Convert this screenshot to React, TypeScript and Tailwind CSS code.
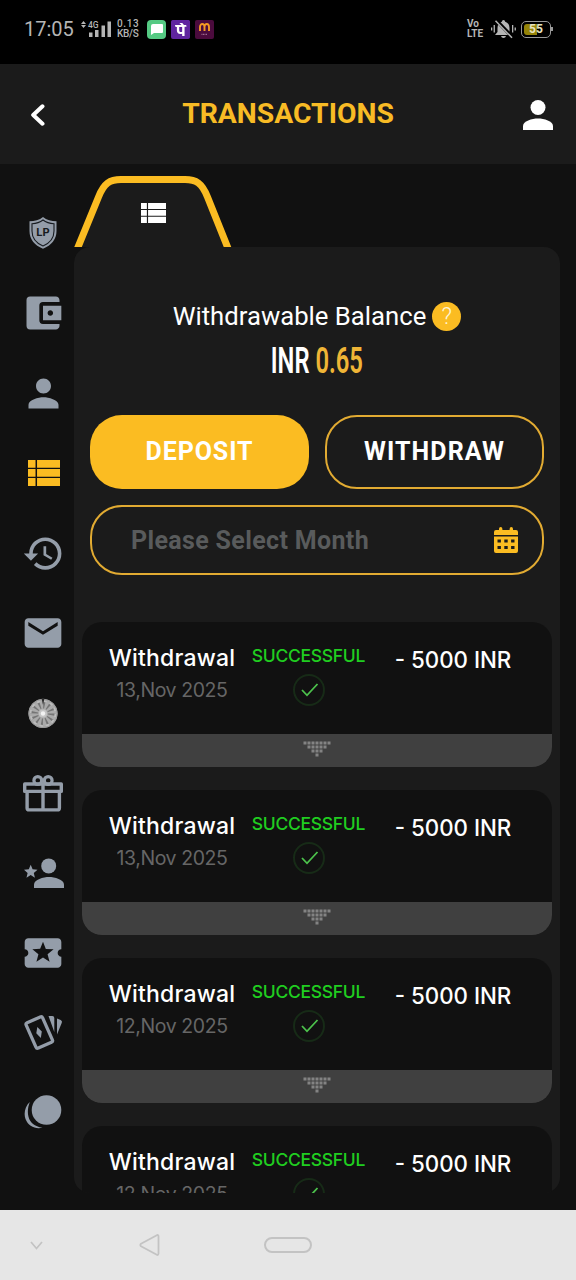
import type { ReactNode } from "react";
import { MdAccountBalanceWallet, MdEmail, MdHistory, MdLocalPlay, MdPerson } from "react-icons/md";
import { SiPhonepe } from "react-icons/si";

interface Transaction {
  type: string;
  date: string;
  status: string;
  amount: string;
}

const transactions: Transaction[] = [
  { type: "Withdrawal", date: "13,Nov 2025", status: "SUCCESSFUL", amount: "- 5000 INR" },
  { type: "Withdrawal", date: "13,Nov 2025", status: "SUCCESSFUL", amount: "- 5000 INR" },
  { type: "Withdrawal", date: "12,Nov 2025", status: "SUCCESSFUL", amount: "- 5000 INR" },
  { type: "Withdrawal", date: "12,Nov 2025", status: "SUCCESSFUL", amount: "- 5000 INR" },
];

const ListIcon = ({ className }: { className?: string }) => (
  <svg viewBox="4 5 17 14" fill="currentColor" preserveAspectRatio="none" className={className}>
    <path d="M4 14h4v-4.100H4zM4 19h4v-4.300H4zM4 9.200h4V5H4zM8.800 14H21v-4.100H8.800zM8.800 19H21v-4.300H8.800zM8.800 5v4.200H21V5z" />
  </svg>
);

const ShieldIcon = () => (
  <svg viewBox="0 0 28 32" className="h-8 w-7">
    <path d="M14 0C10.500 3.200 5.500 4.300 0.500 4.300V14C0.500 22 5.500 28.500 14 31.700C22.500 28.500 27.500 22 27.500 14V4.300C22.500 4.300 17.500 3.200 14 0Z" fill="#949da9" />
    <path d="M14 3C10.500 5.700 6.600 6.500 3 6.700V14C3 20.500 7 26 14 29C21 26 25 20.500 25 14V6.700C21.400 6.500 17.500 5.700 14 3Z" fill="none" stroke="#171b20" strokeWidth="1.100" />
    <text x="14" y="18.500" textAnchor="middle" fontSize="11" fontWeight="700" fontFamily="Inter, sans-serif" fill="#171b20">
      LP
    </text>
  </svg>
);

const WheelIcon = () => (
  <svg viewBox="0 0 30 32" className="h-8 w-[30px]">
    <circle cx="15" cy="16.500" r="14.600" fill="#aaa" />
    <circle cx="15" cy="16.500" r="9" fill="none" stroke="#757575" strokeWidth="8" strokeDasharray="1.700 3.010" />
    <circle cx="15" cy="16.500" r="12.500" fill="none" stroke="#bcbcbc" strokeWidth="2" strokeDasharray="3.500 3.040" />
    <circle cx="15" cy="16.500" r="14.100" fill="none" stroke="#9a9a9a" />
    <circle cx="15" cy="16.500" r="4" fill="#c5c5c5" />
    <circle cx="15" cy="16.500" r="2.200" fill="#f2f2f2" />
    <path d="M13.500 1h3L15 8z" fill="#2b2b2b" />
  </svg>
);

const GiftIcon = () => (
  <svg viewBox="0 0 40 37" fill="none" stroke="currentColor" strokeWidth="3.400" strokeLinejoin="round" className="h-[37px] w-10">
    <rect x="1.700" y="9" width="36.600" height="7.400" />
    <path d="M4.100 16.500v16.400q0 2 2 2h28.300q2 0 2-2V16.500M20 9v26" />
    <circle cx="14.800" cy="5.500" r="3.900" strokeWidth="3.200" />
    <circle cx="25.200" cy="5.500" r="3.900" strokeWidth="3.200" />
  </svg>
);

const PersonStarIcon = () => (
  <svg viewBox="0 0 40 31" fill="currentColor" className="ml-px h-[31px] w-10 shrink-0">
    <circle cx="24.700" cy="7.900" r="7.500" />
    <path d="M10 30v-3.500C10 21.500 19.500 19 25 19s15 2.500 15 7.500V30z" />
    <path d="M6.700 6.800l1.900 4.500 4.900.4-3.700 3.200 1.100 4.800-4.200-2.600-4.200 2.600 1.100-4.800L0 11.700l4.800-.4z" />
  </svg>
);

const CardsIcon = () => (
  <svg viewBox="0 0 40 36" className="h-9 w-10">
    <rect x="-9" y="-13.800" width="18" height="27.600" rx="1.800" transform="translate(16.300 17.500) rotate(-24)" fill="none" stroke="currentColor" strokeWidth="3.300" />
    <path d="M14.300 12l4.500 4.500-1 6.500-4.500-4.700z" fill="currentColor" />
    <path d="M25.500 1h3.800q2 0 2 2v14zM34 3.400l3.700 1.600q1.900.9 1.100 2.800L34 19.500z" fill="currentColor" />
  </svg>
);

const CoinsIcon = () => (
  <svg viewBox="0 0 38 34" fill="currentColor" className="-mt-[3px] h-[34px] w-[38px]">
    <circle cx="22.500" cy="15" r="14.800" />
    <path d="M5.800 7C1 11.500-.5 18.500 1.500 24c2.700 7 9.500 10.500 17 8.800-8-1.200-12.500-5-14-11-1.300-5-.5-10 1.300-14.800z" />
  </svg>
);

const CalendarIcon = () => (
  <svg viewBox="0 0 24 26" fill="#fbbc22" className="h-[26px] w-6">
    <path
      fillRule="evenodd"
      d="M5 2q0-2 1.700-2T8.400 2v1h7.200V2q0-2 1.700-2T19 2v1h3a2 2 0 0 1 2 2v3H0V5a2 2 0 0 1 2-2h3zM0 9.500h24V24a2 2 0 0 1-2 2H2a2 2 0 0 1-2-2zM3.500 12.500v3h3.400v-3zm6.800 0v3h3.400v-3zm6.800 0v3h3.400v-3zM3.500 19v3h3.400v-3zm6.800 0v3h3.400v-3zm6.800 0v3h3.400v-3z"
    />
  </svg>
);

const MutedBellIcon = () => (
  <svg viewBox="0 0 25 20" fill="currentColor" className="h-5 w-[25px]">
    <path d="M12.500 1q1.500 0 1.700 1.700 4.300 1.300 4.300 6.300v4l2.500 3H4l2.500-3V9q0-5 4.300-6.300Q11 1 12.500 1zM10 17h5q-.5 2-2.500 2T10 17z" />
    <path d="M5 1l17 17.500" stroke="#000" strokeWidth="3.500" />
    <path d="M4.500 1.800l16.500 17" stroke="currentColor" strokeWidth="1.500" />
    <path d="M0 8.500h1.300v3H0zM2.600 6h1.300v7.500H2.600zM21 6h1.300v7.500H21zM23.600 8.500h1.300v3h-1.300z" />
  </svg>
);

const sidebarIcons: ReactNode[] = [
  <ShieldIcon />,
  <MdAccountBalanceWallet className="size-11" />,
  <MdPerson className="size-[45px]" />,
  <ListIcon className="ml-0.5 h-[26px] w-8 text-[#fbbc22]" />,
  <MdHistory className="ml-px size-[43px]" />,
  <MdEmail className="size-11" />,
  <WheelIcon />,
  <GiftIcon />,
  <PersonStarIcon />,
  <MdLocalPlay className="size-11" />,
  <CardsIcon />,
  <CoinsIcon />,
];

const StatusBar = () => (
  <div className="flex h-16 shrink-0 items-start justify-between bg-black pr-[23px] pl-6 text-[#b5b5b5]">
    <div className="flex h-[58px] items-center">
      <span className="w-[50px] text-[20px]">17:05</span>
      <svg viewBox="0 0 31 18" fill="currentColor" className="ml-[7px] h-[18px] w-[31px]">
        <path d="M2.500 1L5 4H0zM2.500 8L0 5h5zM8 12.500h3.500V17H8zM14 10h3.500v7H14zM20.500 5.500H24V17h-3.500zM26.500 1.500H30V17h-3.500z" />
        <text x="7" y="7.500" fontSize="8.500" fontWeight="500" fontFamily="Roboto, sans-serif">
          4G
        </text>
      </svg>
      <div className="ml-[5px] w-6 text-[10px] leading-[10px] font-medium">
        <div className="tracking-[0.600px]">0.13</div>
        <div className="tracking-[-0.300px]">KB/S</div>
      </div>
      <div className="ml-[6px] flex size-[19px] items-center justify-center rounded-[4px] bg-[#55ca83]">
        <svg viewBox="0 0 12 12" fill="#fff" className="size-3">
          <path d="M2 1h9q1 0 1 1v7q0 1-1 1H3L0 12V3q0-2 2-2z" />
        </svg>
      </div>
      <div className="relative ml-[5px] flex size-[19px] items-center justify-center overflow-hidden rounded-[2px] bg-[#5f259f]">
        <div className="absolute size-[13px] bg-white" />
        <SiPhonepe className="relative size-6 shrink-0 text-[#5f259f]" />
      </div>
      <div className="ml-[5px] flex size-[19px] flex-col items-center justify-center rounded-[2px] bg-[#4b0b3d]">
        <svg viewBox="0 0 11 12" fill="none" className="h-3 w-[11px]">
          <path d="M1 8V4C1 0 5.500 0 5.500 4V8M5.500 4C5.500 0 10 0 10 4V8" stroke="#f59a23" strokeWidth="1.900" />
          <path d="M2.500 11.300h6" stroke="#c9a0bb" strokeWidth=".8" strokeDasharray="1 .5" />
        </svg>
      </div>
    </div>
    <div className="flex h-[58px] items-center">
      <div className="w-[18px] text-[10px] leading-[10px] font-bold">
        <div>Vo</div>
        <div>LTE</div>
      </div>
      <div className="ml-[6px]">
        <MutedBellIcon />
      </div>
      <div className="ml-[5px] flex h-[17px] w-[30px] rounded-[5px] border-[1.500px] border-[#999] p-[2px]">
        <div className="relative h-full w-[13px] rounded-l-[3px] bg-[#948308]">
          <span className="absolute top-1/2 left-[5px] -translate-y-1/2 text-[12px] leading-none font-bold text-[#e8e4c0]">55</span>
        </div>
      </div>
      <div className="h-1 w-[2px] bg-[#999]" />
    </div>
  </div>
);

const Header = () => (
  <header className="flex h-[100px] shrink-0 items-center justify-between bg-[#1b1b1b] pr-[23px] pl-[30px] text-white">
    <svg viewBox="0 0 15 24" fill="none" stroke="currentColor" strokeWidth="4" strokeLinecap="round" className="mt-[2px] h-6 w-[15px]">
      <path d="M12.500 3.300L3.200 12l9.300 8.700" strokeLinejoin="round" />
    </svg>
    <h1 className="ml-[8px] text-[28.300px] leading-8 font-bold whitespace-nowrap text-[#f8bb25]">TRANSACTIONS</h1>
    <svg viewBox="0 0 30 30" fill="currentColor" className="mt-[2px] h-[30px] w-[30px]">
      <circle cx="15" cy="7.500" r="7.500" />
      <path d="M0 30v-4c0-5 9-7.500 15-7.500s15 2.500 15 7.500v4z" />
    </svg>
  </header>
);

const arrowRows = [
  { y: 0, count: 7 },
  { y: 4, count: 5 },
  { y: 8, count: 3 },
  { y: 12, count: 1 },
];

const TransactionCard = ({ type, date, status, amount }: Transaction) => (
  <div className="h-[145px] shrink-0 overflow-hidden rounded-[20px] bg-[#111] font-[Inter,sans-serif]">
    <div className="flex h-28 px-5 text-center whitespace-nowrap">
      <div className="w-[140px] pt-5">
        <div className="text-[23px] leading-8 font-medium tracking-[0.200px] text-white">{type}</div>
        <div className="text-[19.500px] leading-8 tracking-[-0.400px] text-[#666]">{date}</div>
      </div>
      <div className="flex w-[133px] flex-col items-center pt-[22px]">
        <div className="text-[17.500px] leading-6 font-medium tracking-[-0.300px] text-[#20cd20]">{status}</div>
        <div className="mt-[6px] flex size-8 items-center justify-center rounded-full border-2 border-[#172b17]">
          <svg viewBox="0 0 18 14" fill="none" stroke="#4cc24c" strokeWidth="1.800" className="ml-[2px] h-[14px] w-[18px]">
            <path d="M1 7l5 5.300L16.500 1" />
          </svg>
        </div>
      </div>
      <div className="w-[156px] pt-[22px] text-[22.300px] leading-8 font-medium text-white">{amount}</div>
    </div>
    <div className="flex h-[33px] justify-center bg-[#404040] pt-[7px]">
      <svg viewBox="0 0 28 16" fill="#838383" className="h-4 w-7">
        {arrowRows.map(({ y, count }) =>
          Array.from({ length: count }, (_, i) => <rect key={`${y}-${i}`} x={14 - count * 2 + i * 4 + 0.5} y={y + 0.5} width="3" height="3" />),
        )}
      </svg>
    </div>
  </div>
);

const App = () => (
  <div className="flex h-[1280px] w-[576px] flex-col overflow-hidden bg-[#111] font-[Roboto,sans-serif]">
    <StatusBar />
    <Header />

    <div className="flex h-[1046px] shrink-0">
      <aside className="flex w-[74px] shrink-0 flex-col pt-[29px] pl-[12px] text-[#949da9]">
        {sidebarIcons.map((icon, i) => (
          <div key={i} className="flex h-20 w-[62px] shrink-0 items-center justify-center">
            {icon}
          </div>
        ))}
      </aside>

      <main className="flex w-[486px] flex-col pt-3">
        <div className="relative h-[71px] shrink-0">
          <svg viewBox="0 0 158 71" className="h-[71px] w-[158px]">
            <path d="M2 76L24.500 21C30 7 36 3.500 47 3.500H111C122 3.500 128 7 133.500 21L155.500 76" fill="#1b1b1b" stroke="#fbbc22" strokeWidth="7" />
          </svg>
          <ListIcon className="absolute top-[27px] left-[67px] h-5 w-[25px] text-white" />
        </div>

        <section className="flex h-[946px] flex-col overflow-hidden rounded-[16px] bg-[#1b1b1b] px-2">
          <div className="flex h-[168px] shrink-0 flex-col items-center pt-[53px]">
            <div className="flex items-center gap-[6px]">
              <span className="text-[25.700px] leading-8 text-white">Withdrawable Balance</span>
              <span className="flex size-[29px] items-center justify-center rounded-full bg-[#fbbc22] text-[23px] leading-none font-light text-[#fff5d8]">?</span>
            </div>
            <div className="mt-[9px] flex scale-x-[0.66] gap-[9px] text-[36px] leading-10 font-semibold whitespace-nowrap text-white">
              <span>INR</span>
              <span className="text-[#efb536]">0.65</span>
            </div>
          </div>

          <div className="flex shrink-0 gap-4 px-2 text-[25px] font-bold text-white">
            <button type="button" className="h-[74px] w-[219px] rounded-[32px] bg-[#fbbc22] tracking-[0.900px]">
              DEPOSIT
            </button>
            <button type="button" className="h-[74px] w-[219px] rounded-[32px] border-2 border-[#e2ab32] tracking-[1.100px]">
              WITHDRAW
            </button>
          </div>

          <div className="mx-2 mt-4 flex h-[70px] shrink-0 items-center justify-between rounded-[32px] border-2 border-[#e2ab32] pr-6 pl-[39px]">
            <span className="mt-0.5 text-[25px] font-bold tracking-[0.350px] text-[#595b5c]">Please Select Month</span>
            <CalendarIcon />
          </div>

          <div className="mt-[47px] flex flex-col gap-[23px]">
            {transactions.map((transaction, i) => (
              <TransactionCard key={i} {...transaction} />
            ))}
          </div>
        </section>
      </main>
    </div>

    <nav className="flex h-[70px] shrink-0 items-center bg-[#e6e6e6] pl-[30px] text-[#c3c3c3]">
      <svg viewBox="0 0 13 9" fill="none" stroke="currentColor" strokeWidth="1.700" className="h-[9px] w-[13px]">
        <path d="M1 1l5.500 6.500L12 1" />
      </svg>
      <svg viewBox="0 0 21 22" fill="none" stroke="currentColor" strokeWidth="1.800" strokeLinejoin="round" className="ml-24 h-[22px] w-[21px]">
        <path d="M18.300 1L2 9.800q-1.400 1.200 0 2.400L18.300 21q1.200 0 1.200-1.500v-17Q19.500 1 18.300 1z" />
      </svg>
      <div className="ml-[104px] h-4 w-12 rounded-[8px] border-2 border-current" />
    </nav>
  </div>
);

export default App;
